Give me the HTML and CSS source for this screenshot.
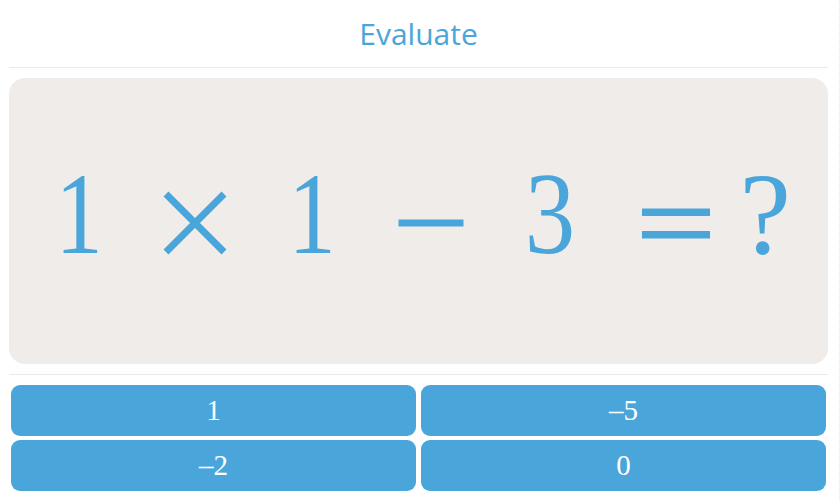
FILE: index.html
```
<!DOCTYPE html>
<html lang="en">
<head>
<meta charset="utf-8">
<title>Evaluate</title>
<link rel="stylesheet" href="styles.css">
</head>
<body>
<div class="page">
  <div class="app">
    <header class="header">
      <h1 class="title">Evaluate</h1>
    </header>
    <section class="card">
      <div class="equation">
        <span class="term num narrow">1</span>
        <span class="term op op-times">
          <svg viewBox="0 0 70 100" width="70" height="100"><path d="M6 30 L64 88 M64 30 L6 88" stroke="currentColor" stroke-width="7" fill="none"/></svg>
        </span>
        <span class="term num narrow">1</span>
        <span class="term op op-minus">
          <svg viewBox="0 0 70 100" width="70" height="100"><rect x="2.5" y="55.5" width="65" height="7" fill="currentColor"/></svg>
        </span>
        <span class="term num num-three">3</span>
        <span class="term op op-eq">
          <svg viewBox="0 0 70 100" width="70" height="100"><rect x="1" y="44.5" width="68" height="7.5" fill="currentColor"/><rect x="1" y="67" width="68" height="7.5" fill="currentColor"/></svg>
        </span>
        <span class="term num num-q">?</span>
      </div>
    </section>
    <div class="divider"></div>
    <div class="answers">
      <button class="answer">1</button>
      <button class="answer">–5</button>
      <button class="answer">–2</button>
      <button class="answer">0</button>
    </div>
  </div>
</div>
</body>
</html>
```
FILE: styles.css
```
html, body {
  margin: 0;
  padding: 0;
  background: #ffffff;
}

.page {
  width: 839px;
  height: 501px;
  border-right: 1px dotted #e6e6e6;
  overflow: hidden;
}

.app {
  width: 819px;
  margin-left: 9px;
}

.header {
  height: 67px;
  border-bottom: 1px solid #e9e9e9;
  display: flex;
  justify-content: center;
}

.title {
  margin: 0;
  font-family: "Open Sans", "Noto Sans", sans-serif;
  font-weight: 400;
  font-size: 30px;
  line-height: 67px;
  color: #4aa6da;
}

.card {
  margin-top: 10px;
  height: 286px;
  border-radius: 16px;
  background: #f0ece9;
  display: flex;
  align-items: center;
  justify-content: center;
  color: #4aa6da;
}

.equation {
  display: flex;
  align-items: flex-start;
  padding-bottom: 14px;
  padding-left: 7px;
}

.term {
  width: 70px;
  height: 100px;
  display: flex;
  justify-content: center;
}

.term + .term {
  margin-left: 46px;
}

.num {
  font-family: "Liberation Serif", "Times New Roman", serif;
  font-size: 116px;
  line-height: 100px;
}

.narrow {
  transform: scaleX(0.82);
}

.num-three {
  transform: scaleX(0.87);
}

.op svg {
  display: block;
}

.op-times + .num { margin-left: 47.5px; }
.num + .op-minus { margin-left: 48.5px; }
.op-minus + .num-three { margin-left: 49px; }
.num-three + .op-eq { margin-left: 56.5px; }
.op-eq + .num-q { margin-left: 19px; }

.divider {
  margin-top: 10px;
  border-top: 1px solid #e9e9e9;
}

.answers {
  margin-top: 10px;
  padding: 0 2px;
  display: grid;
  grid-template-columns: 1fr 1fr;
  gap: 4px 5px;
}

.answer {
  height: 51px;
  border: none;
  border-radius: 9px;
  background: #4aa6da;
  color: #ffffff;
  font-family: "Liberation Serif", "Times New Roman", serif;
  font-size: 29px;
  padding: 0;
  margin: 0;
}
```
